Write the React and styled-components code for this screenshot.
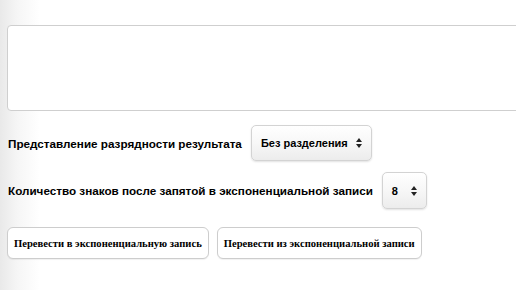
import React from "react";
import styled, { createGlobalStyle } from "styled-components";

const GlobalStyle = createGlobalStyle`
  html, body {
    margin: 0;
    padding: 0;
    overflow: hidden;
  }
  body {
    width: 516px;
    height: 290px;
    background: linear-gradient(to right, #e9e9e9 0px, #f6f6f6 18px, #ffffff 40px);
  }
`;

const Page = styled.div`
  padding: 25px 0 0 7px;
  font-family: "Liberation Sans", Arial, sans-serif;
  color: #000;
`;

const Output = styled.textarea`
  display: block;
  box-sizing: border-box;
  width: 530px;
  height: 86px;
  margin: 0;
  border: 1px solid #cfcfcf;
  border-radius: 4px;
  background: #fff;
  resize: none;
  outline: none;
`;

const Row = styled.div`
  display: flex;
  align-items: center;
  gap: 9px;
  margin-top: ${(p) => p.$top}px;
`;

const Label = styled.span`
  font-size: 11.7px;
  font-weight: bold;
  padding-left: 1px;
`;

const Select = styled.div`
  box-sizing: border-box;
  display: flex;
  align-items: center;
  justify-content: space-between;
  width: ${(p) => p.$width}px;
  height: ${(p) => p.$height}px;
  padding: 0 9px 0 9px;
  border: 1px solid #d3d3d3;
  border-radius: 5px;
  background: linear-gradient(to bottom, #ffffff 0%, #f7f7f7 50%, #ececec 100%);
  box-shadow: 0 1px 2px rgba(0, 0, 0, 0.12);
  font-size: 11px;
  font-weight: bold;
`;

const Arrows = () => (
  <svg width="6" height="10" viewBox="0 0 6 10">
    <path d="M3 0 L6 4 L0 4 Z" fill="#222" />
    <path d="M0 6 L6 6 L3 10 Z" fill="#222" />
  </svg>
);

const Buttons = styled.div`
  display: flex;
  gap: 8px;
  margin-top: 18px;
`;

const Button = styled.button`
  box-sizing: border-box;
  height: 32px;
  padding: 0 6px;
  border: 1px solid #cdcdcd;
  border-radius: 6px;
  background: #fff;
  font-family: "Liberation Serif", "Times New Roman", serif;
  font-size: 10.6px;
  font-weight: bold;
  color: #000;
  box-shadow: 0 1px 1px rgba(0, 0, 0, 0.06);
`;

export default function App() {
  return (
    <>
      <GlobalStyle />
      <Page>
        <Output />
        <Row $top={14}>
          <Label>Представление разрядности результата</Label>
          <Select $width={121} $height={36}>
            <span>Без разделения</span>
            <Arrows />
          </Select>
        </Row>
        <Row $top={11}>
          <Label>Количество знаков после запятой в экспоненциальной записи</Label>
          <Select $width={45} $height={37}>
            <span>8</span>
            <Arrows />
          </Select>
        </Row>
        <Buttons>
          <Button>Перевести в экспоненциальную запись</Button>
          <Button>Перевести из экспоненциальной записи</Button>
        </Buttons>
      </Page>
    </>
  );
}
